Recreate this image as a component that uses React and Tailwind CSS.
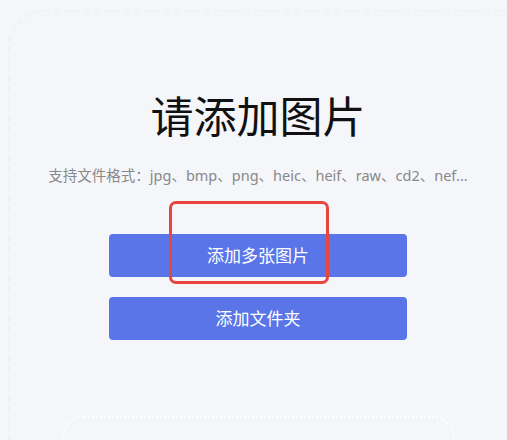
export default function App() {
  const font = { fontFamily: '"Noto Sans", "Noto Sans CJK SC", sans-serif' };
  return (
    <div
      className="relative w-[507px] h-[440px] overflow-hidden bg-[#f5f6fa]"
      style={font}
    >
      {/* faint outer dashed frame */}
      <div className="absolute left-[8px] top-[10px] w-[600px] h-[600px] rounded-[36px] border-2 border-dashed border-[#f0f1f8]" />

      <div className="relative flex flex-col items-center pt-[96px] pl-[9px]">
        <h1 className="text-[43px] leading-[42px] font-normal text-[#111]">请添加图片</h1>
        <p className="mt-[27px] text-[14.5px] leading-[20px] text-[#888]">
          支持文件格式：jpg、bmp、png、heic、heif、raw、cd2、nef...
        </p>

        <div className="relative mt-[49px] flex flex-col gap-[20px] w-[298px]">
          <button className="h-[43px] rounded-[4px] bg-[#5a75e8] text-white text-[17px]">
            添加多张图片
          </button>
          <button className="h-[43px] rounded-[4px] bg-[#5a75e8] text-white text-[17px]">
            添加文件夹
          </button>
          {/* red highlight annotation */}
          <div className="absolute left-[60px] top-[-33px] w-[160px] h-[83px] rounded-[7px] border-[3px] border-[#e8453c]" />
        </div>

        <div className="mt-[76px] w-[393px] h-[100px] rounded-[22px] border-2 border-dotted border-white" />
      </div>
    </div>
  );
}
